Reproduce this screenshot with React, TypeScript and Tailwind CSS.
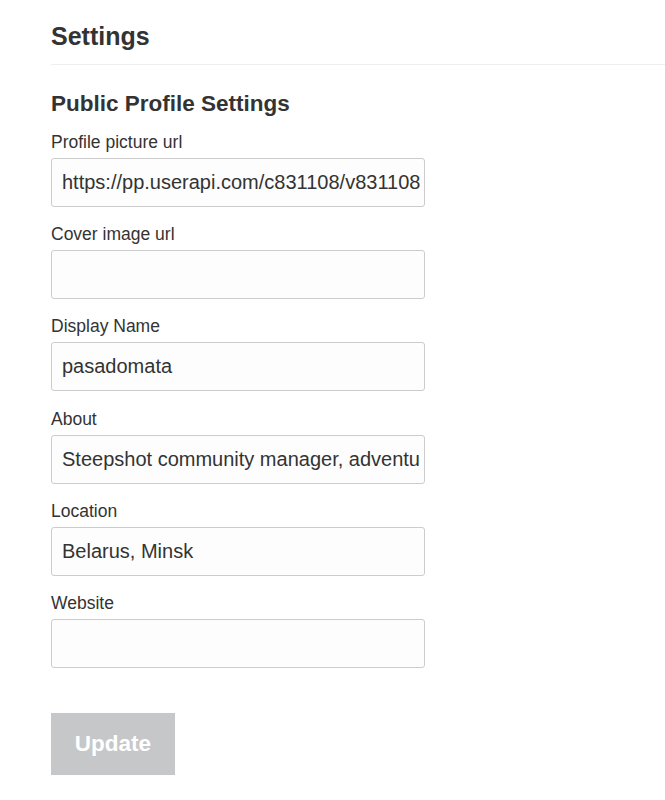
const fields = [
  { label: 'Profile picture url', value: 'https://pp.userapi.com/c831108/v831108590/1b1a0/avatar.jpg' },
  { label: 'Cover image url', value: '' },
  { label: 'Display Name', value: 'pasadomata' },
  { label: 'About', value: 'Steepshot community manager, adventurer and photographer' },
  { label: 'Location', value: 'Belarus, Minsk' },
  { label: 'Website', value: '' },
];

export default function App() {
  return (
    <div className="min-h-[800px] bg-white pl-[51px] text-[#333] font-['Liberation_Sans',Arial,sans-serif]">
      <div className="pt-[23px] pb-[14px] border-b border-[#eeeeee]">
        <h1 className="text-[25px] leading-[27px] font-bold">Settings</h1>
      </div>
      <h2 className="mt-[28px] text-[22.5px] leading-[22px] font-bold">Public Profile Settings</h2>
      <form className="mt-[17px] w-[374px]" onSubmit={e => e.preventDefault()}>
        <div className="flex flex-col gap-[17.2px]">
          {fields.map(f => (
            <div key={f.label} className="flex flex-col">
              <label className="text-[17.5px] leading-[20px] mb-[6px]">{f.label}</label>
              <input
                type="text"
                defaultValue={f.value}
                className="h-[49px] w-full rounded-[3px] border border-[#cccccc] bg-[#fdfdfd] pl-[10px] pr-[4px] text-[20px] text-[#333] outline-none"
              />
            </div>
          ))}
        </div>
        <button
          type="submit"
          className="mt-[45px] h-[62px] w-[124px] bg-[#c6c7c9] text-[22.5px] font-bold text-white"
        >
          Update
        </button>
      </form>
    </div>
  );
}
